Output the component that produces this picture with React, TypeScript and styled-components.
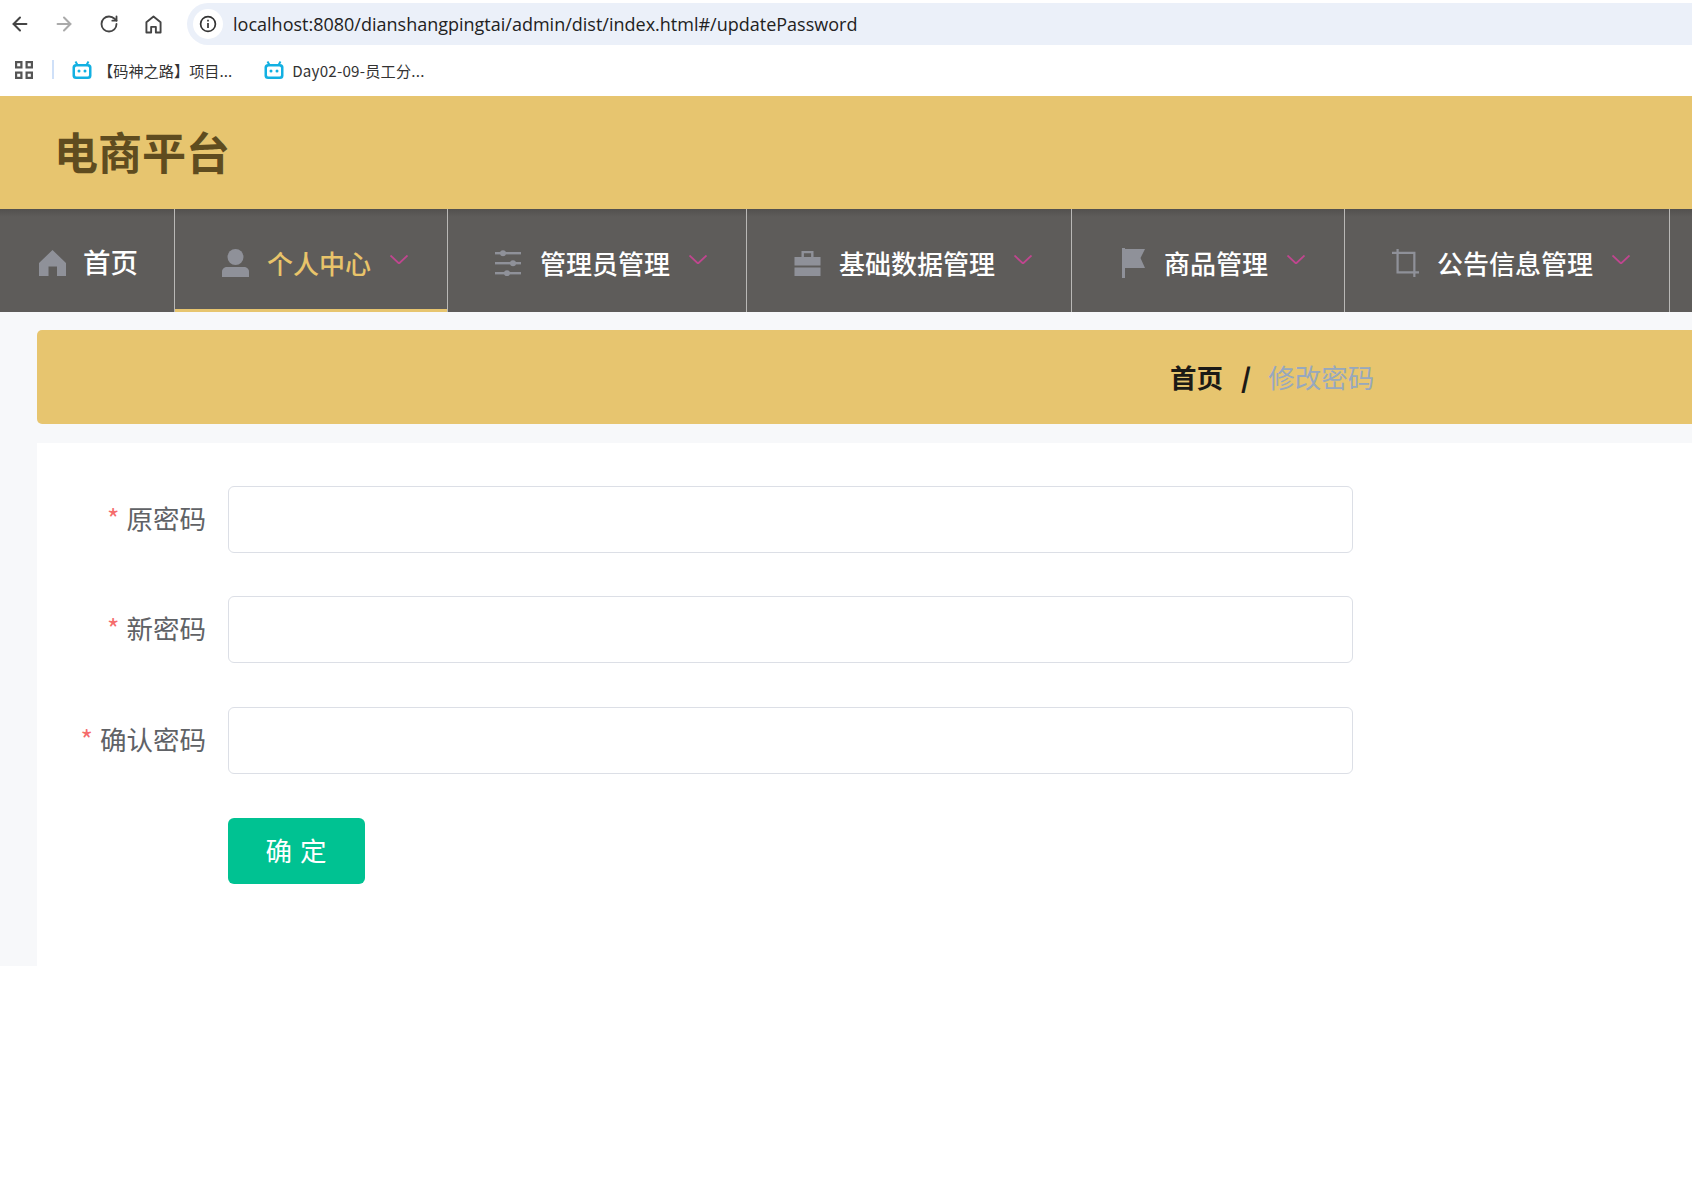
import React from "react";
import styled, { createGlobalStyle } from "styled-components";
import { ArrowLeft, ArrowRight, RotateCw } from "lucide-react";

const GlobalStyle = createGlobalStyle`
  html, body {
    margin: 0;
    padding: 0;
    background: #fff;
    overflow: hidden;
  }
  body {
    font-family: "Noto Sans CJK SC", "Noto Sans", sans-serif;
  }
`;

const HomeOutline = () => (
  <svg width="17" height="19" viewBox="0 0 18 20" fill="none" stroke="#444" strokeWidth="2">
    <path d="M1.500 18.500V7.500L9 1.500l7.500 6v11h-5v-6h-5v6z" strokeLinejoin="round" />
  </svg>
);

const InfoIcon = () => (
  <svg width="18" height="18" viewBox="0 0 18 18" fill="none" stroke="#333" strokeWidth="1.700">
    <circle cx="9" cy="9" r="7.400" />
    <path d="M9 8v5" />
    <path d="M9 4.800v1.600" />
  </svg>
);

const AppsIcon = () => (
  <svg width="18" height="18" viewBox="0 0 18 18" fill="none" stroke="#555" strokeWidth="2.200">
    <rect x="1.100" y="1.100" width="5.300" height="5.300" />
    <rect x="11.600" y="1.100" width="5.300" height="5.300" />
    <rect x="1.100" y="11.600" width="5.300" height="5.300" />
    <rect x="11.600" y="11.600" width="5.300" height="5.300" />
  </svg>
);

const TvIcon = () => (
  <svg width="20" height="18" viewBox="0 0 20 18">
    <path d="M5.500 4L3.500 .5M14.500 4l2-3.500" stroke="#12b0e2" strokeWidth="2" fill="none" />
    <rect x="0.500" y="3" width="19" height="15" rx="3.500" fill="#12b0e2" />
    <rect x="3" y="5.500" width="14" height="10" rx="1.500" fill="#fff" />
    <circle cx="7" cy="10" r="1.500" fill="#12b0e2" />
    <circle cx="13" cy="10" r="1.500" fill="#12b0e2" />
  </svg>
);

const HomeFill = () => (
  <svg width="27" height="26" viewBox="0 0 27 26" fill="#8f9199">
    <path d="M13.500 0L27 13v13h-9v-9.500H9.500V26H0V13z" />
  </svg>
);

const UserFill = () => (
  <svg width="27" height="28" viewBox="0 0 27 28" fill="#8f9199">
    <ellipse cx="13.500" cy="8" rx="8" ry="8" />
    <path d="M0 28v-5.500C0 20 2.500 18 5 18h17c2.500 0 5 2 5 4.500V28z" />
  </svg>
);

const SlidersIcon = () => (
  <svg width="27" height="26" viewBox="0 0 27 26" fill="#8f9199">
    <rect x="0" y="2" width="26" height="2.400" />
    <rect x="0" y="12" width="26" height="2.400" />
    <rect x="0" y="22" width="26" height="2.400" />
    <circle cx="8" cy="3.200" r="3" />
    <circle cx="18" cy="13.200" r="3" />
    <circle cx="12" cy="23.200" r="3" />
  </svg>
);

const BriefcaseIcon = () => (
  <svg width="27" height="26" viewBox="0 0 27 26" fill="#8f9199">
    <path d="M7.500 7V1h12v6h-2.400V3.200H9.900V7z" />
    <rect x="0.500" y="7" width="26" height="8.500" />
    <rect x="0.500" y="17.500" width="26" height="8.500" />
  </svg>
);

const FlagIcon = () => (
  <svg width="27" height="30" viewBox="0 0 27 30" fill="#8f9199">
    <rect x="3" y="0" width="3" height="30" />
    <path d="M6 1h20l-4.500 9 4.500 10H6z" />
  </svg>
);

const CropIcon = () => (
  <svg width="29" height="30" viewBox="0 0 29 30" fill="none" stroke="#8f9199" strokeWidth="2.400">
    <path d="M0 4h24v26" />
    <path d="M6 0v25h23" />
  </svg>
);

const Chevron = () => (
  <ChevronBox viewBox="0 0 18 9" fill="none" stroke="#c0468f" strokeWidth="1.800">
    <path d="M.5 .5L9 8.500 17.500 .5" />
  </ChevronBox>
);

type MenuEntry = { label: string; icon: React.ReactNode; active?: boolean };

const menu: MenuEntry[] = [
  { label: "个人中心", icon: <UserFill />, active: true },
  { label: "管理员管理", icon: <SlidersIcon /> },
  { label: "基础数据管理", icon: <BriefcaseIcon /> },
  { label: "商品管理", icon: <FlagIcon /> },
  { label: "公告信息管理", icon: <CropIcon /> },
];

const fields = [
  { label: "原密码" },
  { label: "新密码" },
  { label: "确认密码" },
];

export default function App() {
  return (
    <Page>
      <GlobalStyle />
      <Toolbar>
        <ToolIcon>
          <ArrowLeft size={22} color="#444" strokeWidth={2.2} />
        </ToolIcon>
        <ToolIcon>
          <ArrowRight size={22} color="#aaa" strokeWidth={2.2} />
        </ToolIcon>
        <ToolIcon>
          <RotateCw size={20} color="#444" strokeWidth={2.2} />
        </ToolIcon>
        <ToolIcon>
          <HomeOutline />
        </ToolIcon>
        <AddressBar>
          <InfoBadge>
            <InfoIcon />
          </InfoBadge>
          <UrlText>localhost:8080/dianshangpingtai/admin/dist/index.html#/updatePassword</UrlText>
        </AddressBar>
      </Toolbar>
      <Bookmarks>
        <AppsIcon />
        <BookmarkDivider />
        <Bookmark>
          <TvIcon />
          <span>【码神之路】项目...</span>
        </Bookmark>
        <Bookmark $wide>
          <TvIcon />
          <span>Day02-09-员工分...</span>
        </Bookmark>
      </Bookmarks>

      <Header>
        <Title>电商平台</Title>
      </Header>

      <Nav>
        <HomeItem>
          <HomeFill />
          <HomeLabel>首页</HomeLabel>
        </HomeItem>
        {menu.map((m) => (
          <NavItem key={m.label} $active={m.active}>
            <IconSlot>{m.icon}</IconSlot>
            <NavLabel>{m.label}</NavLabel>
            <Chevron />
          </NavItem>
        ))}
      </Nav>

      <Content>
        <Breadcrumb>
          <CrumbStrong>首页</CrumbStrong>
          <CrumbSep>/</CrumbSep>
          <CrumbCurrent>修改密码</CrumbCurrent>
        </Breadcrumb>
        <FormPanel>
          {fields.map((f) => (
            <FormRow key={f.label}>
              <FieldLabel>
                <Star>*</Star>
                {f.label}
              </FieldLabel>
              <TextInput type="password" />
            </FormRow>
          ))}
          <ActionRow>
            <SubmitButton>确 定</SubmitButton>
          </ActionRow>
        </FormPanel>
      </Content>
    </Page>
  );
}

const Page = styled.div`
  width: 1692px;
  height: 1179px;
  overflow: hidden;
  background: #fff;
`;

const Toolbar = styled.div`
  height: 48px;
  display: flex;
  align-items: center;
  box-sizing: border-box;
`;

const ToolIcon = styled.div`
  width: 44.700px;
  height: 36px;
  flex: none;
  display: flex;
  align-items: center;
  justify-content: center;
  &:first-child {
    width: 40px;
    margin-right: 2px;
  }
`;

const AddressBar = styled.div`
  flex: 1;
  height: 42px;
  margin-left: 11px;
  border-radius: 21px 0 0 21px;
  background: #ebf0f9;
  display: flex;
  align-items: center;
  padding-left: 6px;
`;

const InfoBadge = styled.div`
  width: 30px;
  height: 30px;
  border-radius: 50%;
  background: #fff;
  display: flex;
  align-items: center;
  justify-content: center;
`;

const UrlText = styled.span`
  margin-left: 10px;
  font-family: "Open Sans", sans-serif;
  font-size: 18px;
  color: #222;
  white-space: nowrap;
`;

const Bookmarks = styled.div`
  height: 48px;
  display: flex;
  align-items: center;
  padding: 0 0 5px 15px;
  box-sizing: border-box;
`;

const BookmarkDivider = styled.div`
  width: 2px;
  height: 19px;
  background: #cfe0f8;
  margin: 0 18px 0 19px;
`;

const Bookmark = styled.div<{ $wide?: boolean }>`
  display: flex;
  align-items: center;
  gap: ${(p) => (p.$wide ? "8px" : "6px")};
  margin-right: 32px;
  font-size: 15.200px;
  letter-spacing: ${(p) => (p.$wide ? "0.2px" : "0")};
  color: #333;
  white-space: nowrap;
`;

const Header = styled.header`
  height: 113px;
  background: #e7c56f;
  display: flex;
  align-items: center;
  padding-left: 54px;
`;

const Title = styled.h1`
  margin: 0 0 2px;
  font-size: 44px;
  font-weight: 700;
  line-height: 1.2;
  color: #5f4c1f;
`;

const Nav = styled.nav`
  height: 103px;
  display: flex;
  background: linear-gradient(#52504e, #5e5c5a 8px);
`;

const HomeItem = styled.div`
  flex: none;
  width: 175px;
  box-sizing: border-box;
  display: flex;
  align-items: center;
  gap: 17px;
  padding: 4px 0 0 39px;
  border-right: 1px solid #b9b8b6;
`;

const HomeLabel = styled.span`
  font-size: 27.500px;
  font-weight: 500;
  color: #fff;
  margin-top: -4px;
`;

const NavItem = styled.div<{ $active?: boolean }>`
  flex: none;
  box-sizing: border-box;
  display: flex;
  align-items: center;
  padding: 4px 39px 0 47px;
  border-right: 1px solid #b9b8b6;
  color: ${(p) => (p.$active ? "#e9c46a" : "#fff")};
  box-shadow: ${(p) => (p.$active ? "inset 0 -3px 0 #e7c56f" : "none")};
`;

const IconSlot = styled.span`
  width: 27px;
  flex: none;
  display: flex;
  justify-content: flex-start;
`;

const NavLabel = styled.span`
  font-size: 26px;
  font-weight: 500;
  margin: 0 19px 0 18px;
  white-space: nowrap;
`;

const ChevronBox = styled.svg`
  width: 18px;
  height: 9px;
  flex: none;
  margin-bottom: 6px;
`;

const Content = styled.main`
  height: 654px;
  background: #f7f8fa;
  padding: 18px 0 0 37px;
  box-sizing: border-box;
`;

const Breadcrumb = styled.div`
  height: 94px;
  background: #e7c56f;
  border-radius: 5px 0 0 5px;
  display: flex;
  align-items: center;
  padding: 0 0 2px 1133px;
  box-sizing: border-box;
  font-size: 26.500px;
`;

const CrumbStrong = styled.span`
  font-weight: 700;
  color: #1c1a16;
`;

const CrumbSep = styled.span`
  font-weight: 900;
  color: #1c1a16;
  margin: 0 17px 0 18px;
`;

const CrumbCurrent = styled.span`
  color: #97a8be;
`;

const FormPanel = styled.div`
  margin-top: 19px;
  background: #fff;
  height: 523px;
  padding-top: 43px;
  box-sizing: border-box;
`;

const FormRow = styled.div`
  display: flex;
  align-items: center;
  height: 67px;
  margin-bottom: 43.300px;
`;

const FieldLabel = styled.label`
  width: 169px;
  flex: none;
  text-align: right;
  margin: 0 22px 4px 0;
  font-size: 26.500px;
  color: #606266;
  white-space: nowrap;
`;

const Star = styled.span`
  color: #f56c6c;
  margin-right: 7px;
`;

const TextInput = styled.input`
  width: 1125px;
  height: 67px;
  box-sizing: border-box;
  border: 1px solid #dcdfe6;
  border-radius: 6px;
  background: #fff;
  outline: none;
`;

const ActionRow = styled.div`
  padding: 1px 0 0 191px;
`;

const SubmitButton = styled.button`
  width: 137px;
  height: 66px;
  border: none;
  border-radius: 6px;
  background: #00c292;
  color: #fff;
  font-family: inherit;
  font-size: 26.500px;
  letter-spacing: 1px;
  padding: 0 0 2px;
`;
